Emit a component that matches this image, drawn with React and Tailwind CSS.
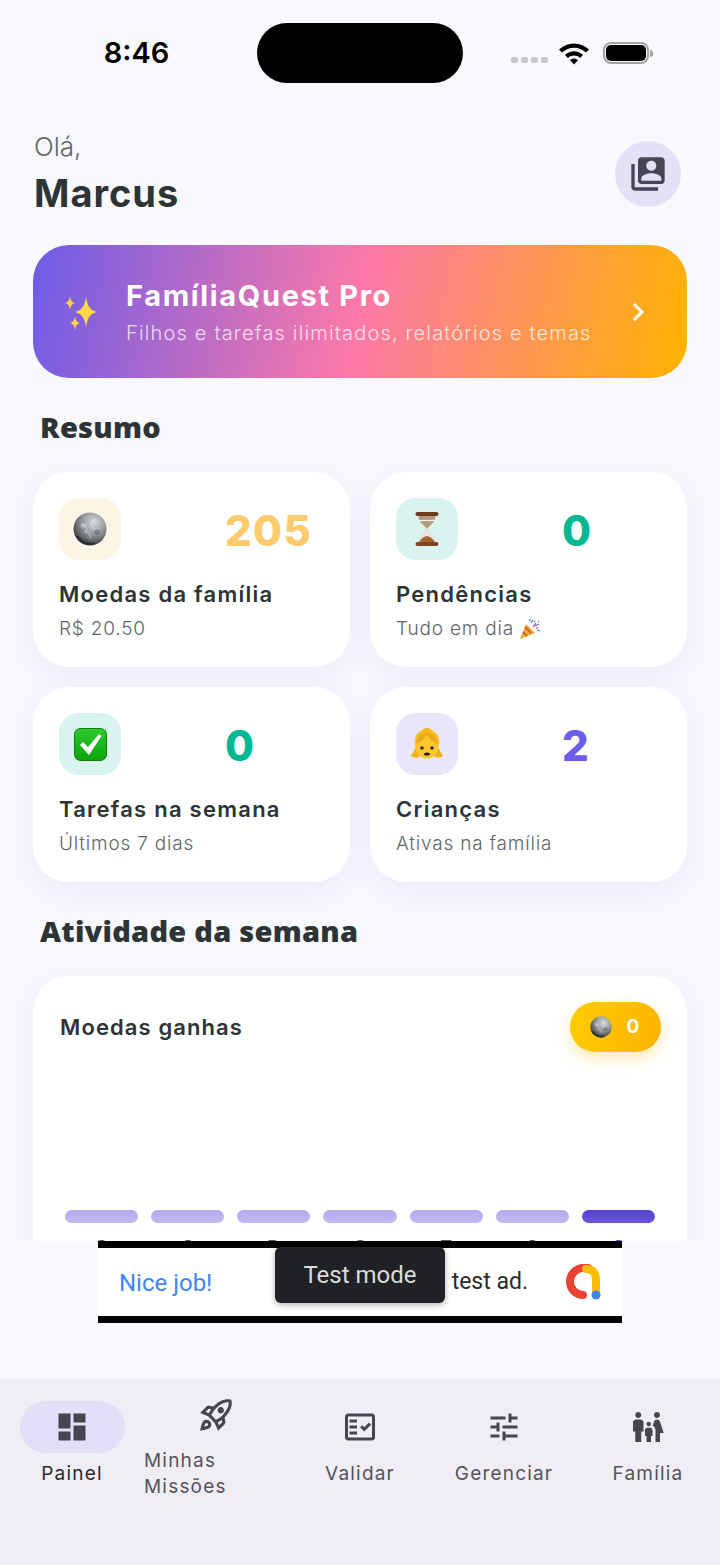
import { MdDashboard, MdOutlineRocketLaunch, MdOutlineFactCheck, MdTune, MdFamilyRestroom, MdSwitchAccount, MdChevronRight } from 'react-icons/md';

const Coin = ({ id, size }) => (
    <svg width={size} height={size} viewBox="0 0 34 34">
        <defs>
            <radialGradient id={id} cx="62%" cy="30%" r="80%">
                <stop offset="0%" stopColor="#d8dadc" />
                <stop offset="45%" stopColor="#94989b" />
                <stop offset="100%" stopColor="#26282b" />
            </radialGradient>
        </defs>
        <circle cx="17" cy="17" r="16.5" fill={`url(#${id})`} />
        <path d="M8 12l4 1 2 4-2 3 4 1 2 6M21 7l-3 6 4 5 4-1" fill="none" stroke="#f0f1f2" strokeWidth="1.5" opacity="0.35" />
        <circle cx="10" cy="14" r="2.5" fill="#e8eaeb" opacity="0.35" />
        <circle cx="24" cy="20" r="3" fill="#4a4d50" opacity="0.4" />
        <path d="M4 24c4 6 10 9 18 7" fill="none" stroke="#17181a" strokeWidth="2.500" opacity="0.55" />
    </svg>
);

const Hourglass = () => (
    <svg width="24" height="36" viewBox="0 0 24 36">
        <path d="M3 4h18c0 8-6 10-7.500 14 1.500 4 7.500 6 7.500 14H3c0-8 6-10 7.500-14C9 14 3 12 3 4z" fill="#e6e4e0" />
        <path d="M3.500 5h17c-.5 7-6 9-8.500 13-2.500-4-8-6-8.500-13z" fill="#b39a7e" />
        <path d="M4 9.500h16" stroke="#f6f3ee" strokeWidth="1.200" />
        <path d="M4 32c.5-3 4-6 8-7 4 1 7.500 4 8 7z" fill="#a4642f" />
        <rect x="0.500" y="1" width="23" height="4" rx="2" fill="#6f3c1e" />
        <rect x="0.500" y="31" width="23" height="4" rx="2" fill="#7d4522" />
    </svg>
);

const CheckEmoji = () => (
    <svg width="33" height="33" viewBox="0 0 33 33">
        <defs>
            <linearGradient id="check-bg" x1="0" y1="0" x2="0" y2="1">
                <stop offset="0%" stopColor="#2cc92c" />
                <stop offset="100%" stopColor="#0da30d" />
            </linearGradient>
        </defs>
        <rect x="0.500" y="0.500" width="32" height="32" rx="6" fill="url(#check-bg)" stroke="#0a7f0a" />
        <path d="M6 17l3-3 5 5L25 6l2.500 2L15 27z" fill="#fff" />
    </svg>
);

const Girl = () => (
    <svg width="34" height="34" viewBox="0 0 34 34">
        <path d="M6 20c-2 4-4 7-5 9 2 2 7 2 9 0zM28 20c2 4 4 7 5 9-2 2-7 2-9 0z" fill="#efb31c" />
        <path d="M17 1c3 0 5 2 6 3 5 2 7 8 6 14H5C4 12 6 6 11 4c1-1 3-3 6-3z" fill="#f5bb22" />
        <circle cx="17" cy="20" r="11.500" fill="#fdc62e" />
        <path d="M6 17c3-1 8-5 11-9 3 4 8 8 11 9-1-6-5-11-11-11S7 11 6 17z" fill="#eeaa16" />
        <circle cx="12" cy="21" r="1.700" fill="#33241a" />
        <circle cx="22" cy="21" r="1.700" fill="#33241a" />
        <ellipse cx="17" cy="27" rx="3" ry="1.600" fill="#2e1b12" />
    </svg>
);

const Party = () => (
    <svg width="22" height="22" viewBox="0 0 22 22">
        <path d="M1 21L7 6l9 9z" fill="#e8a93a" />
        <path d="M4 14l4 4M6 9l6 6" stroke="#c2552e" strokeWidth="1.500" />
        <path d="M12 5l2-3M16 8l4-2M15 3l1 1M18 12l3 1M11 1l0 2" stroke="#4a86d8" strokeWidth="1.300" />
        <path d="M14 9l3-4M17 10l2 0M19 3l1 1" stroke="#e0558a" strokeWidth="1.300" />
    </svg>
);

const Sparkles = () => (
    <svg width="36" height="36" viewBox="0 0 36 36">
        <path d="M22 2Q23 16 33 18 23 20 22 34 21 20 11 18 21 16 22 2z" fill="#ffd84a" />
        <path d="M6 2Q6.500 8 11 9 6.500 10 6 16 5.500 10 1 9 5.500 8 6 2z" fill="#ffcf45" />
        <path d="M11 22Q11.500 28 16 29 11.500 30 11 36 10.500 30 6 29 10.500 28 11 22z" fill="#ffd84a" />
    </svg>
);

const Wifi = () => (
    <svg width="32" height="24" viewBox="0 0 32 24">
        <path d="M1 8.500C9.500 .5 22.500 .5 31 8.500l-3 3C21 5 11 5 4 11.500z" fill="#000" />
        <path d="M7 14c5.500-5 12.500-5 18 0l-3 3c-3.700-3.200-8.300-3.200-12 0z" fill="#000" />
        <path d="M12 19c2.500-2 5.500-2 8 0l-4 4.500z" fill="#000" />
    </svg>
);

const AdLogo = () => (
    <svg width="36" height="36" viewBox="0 0 36 36">
        <path d="M22 4C12 2 4 9 4 18c0 7 6 13 13 13" fill="none" stroke="#ea4335" strokeWidth="8" strokeLinecap="round" />
        <path d="M20 5c7 0 10 4 10 10v14" fill="none" stroke="#fbbc04" strokeWidth="8" strokeLinecap="round" />
        <circle cx="30" cy="31" r="4.500" fill="#4285f4" />
    </svg>
);

const StatCard = ({ icon, iconBg, value, valueColor, title, sub }) => (
    <div className="h-[195px] rounded-[36px] bg-white p-[26px] shadow-[0_10px_30px_rgba(108,92,231,0.08)]">
        <div className="flex items-center">
            <div className={`flex h-[62px] w-[62px] items-center justify-center rounded-[20px] ${iconBg}`}>{icon}</div>
            <span className={`ml-[104px] pt-[3px] text-[42px] font-extrabold leading-none tracking-[1.300px] ${valueColor}`}>{value}</span>
        </div>
        <div className="mt-[19px] text-[22px] font-semibold leading-[30px] tracking-[1.250px] text-[#2d3436]">{title}</div>
        <div className="mt-[7px] flex items-center gap-[5px] text-[19px] font-light leading-[26px] tracking-[0.800px] text-[#5f666a]">{sub}</div>
    </div>
);

const NavItem = ({ icon, label, active }) => (
    <div className="flex w-[144px] flex-col items-center pt-[22px]">
        <div className={`flex h-[52px] w-[105px] items-center justify-center rounded-full ${active ? 'bg-[#e3dff8]' : ''}`}>{icon}</div>
        <span className={`mt-[6px] pt-[2px] text-[19px] leading-[26px] tracking-[1.200px] ${active ? 'text-[#2a2930]' : 'text-[#55535c]'}`}>{label}</span>
    </div>
);

const days = ['S', 'S', 'D', 'S', 'T', 'Q', 'Q'];

export default function App() {
    return (
        <div className="flex h-[1565px] w-[720px] flex-col overflow-hidden bg-[#f8f8fd] font-['Inter',sans-serif]">
            <div className="h-[1241px] shrink-0 overflow-hidden">
                {/* status bar */}
                <div className="flex h-[100px] items-start">
                    <div className="flex h-[106px] w-[257px] items-center justify-center pl-[16px] text-[29px] font-semibold text-black">8:46</div>
                    <div className="mt-[23px] h-[60px] w-[206px] rounded-[30px] bg-black"></div>
                    <div className="ml-[48px] mt-[41px] flex items-center">
                        <div className="mt-[13px] flex gap-[3px]">
                            <span className="h-[6px] w-[7px] rounded-[2px] bg-[#c9c9cc]"></span>
                            <span className="h-[6px] w-[7px] rounded-[2px] bg-[#c9c9cc]"></span>
                            <span className="h-[6px] w-[7px] rounded-[2px] bg-[#c9c9cc]"></span>
                            <span className="h-[6px] w-[7px] rounded-[2px] bg-[#c9c9cc]"></span>
                        </div>
                        <div className="ml-[10px]"><Wifi /></div>
                        <div className="ml-[13px] flex h-[22px] w-[46px] items-center justify-center rounded-[8px] border-2 border-[#a3a3a6]">
                            <div className="h-[16px] w-[40px] rounded-[5px] bg-black"></div>
                        </div>
                        <div className="ml-[1px] h-[7px] w-[3px] rounded-r-full bg-[#a3a3a6]"></div>
                    </div>
                </div>

                {/* greeting */}
                <div className="mt-[30px] flex items-start justify-between pl-[34px] pr-[39px]">
                    <div>
                        <div className="text-[26px] font-light leading-[34px] text-[#5f666a]">Olá,</div>
                        <div className="mt-[6px] text-[38px] font-bold leading-[46px] tracking-[1px] text-[#2d3436]">Marcus</div>
                    </div>
                    <div className="mt-[11px] flex h-[66px] w-[66px] items-center justify-center rounded-full bg-[#e5e0f8]">
                        <MdSwitchAccount size={40} color="#474552" />
                    </div>
                </div>

                {/* pro banner */}
                <div className="mx-[33px] mt-[29px] flex h-[133px] items-center rounded-[36px] bg-[linear-gradient(101deg,#6c5ce7,#fd79a8,#ffb300)] pl-[31px] pr-[31px]">
                    <Sparkles />
                    <div className="ml-[26px] flex-1 pt-[2px]">
                        <div className="text-[29px] font-bold leading-[36px] tracking-[1.650px] text-white">FamíliaQuest Pro</div>
                        <div className="mt-[5px] text-[20px] font-light leading-[28px] tracking-[1.170px] text-white/75">Filhos e tarefas ilimitados, relatórios e temas</div>
                    </div>
                    <MdChevronRight size={36} color="#fff" />
                </div>

                <h2 className="ml-[40px] mt-[29px] font-['Noto_Sans',sans-serif] text-[29px] font-black leading-[40px] tracking-[0.250px] text-[#2d3436]">Resumo</h2>

                <div className="mx-[33px] mt-[25px] grid grid-cols-2 gap-[20px]">
                    <StatCard icon={<Coin id="coin-a" size={34} />} iconBg="bg-[#fff5e6]" value="205" valueColor="text-[#fdcb6e]" title="Moedas da família" sub="R$ 20.50" />
                    <StatCard icon={<Hourglass />} iconBg="bg-[#d9f4ee]" value="0" valueColor="text-[#00b894]" title="Pendências" sub={<>Tudo em dia <Party /></>} />
                    <StatCard icon={<CheckEmoji />} iconBg="bg-[#d9f4ee]" value="0" valueColor="text-[#00b894]" title="Tarefas na semana" sub="Últimos 7 dias" />
                    <StatCard icon={<Girl />} iconBg="bg-[#e9e6fb]" value="2" valueColor="text-[#6c5ce7]" title="Crianças" sub="Ativas na família" />
                </div>

                <h2 className="ml-[40px] mt-[29px] font-['Noto_Sans',sans-serif] text-[29px] font-black leading-[40px] tracking-[0.250px] text-[#2d3436]">Atividade da semana</h2>

                {/* chart card, cut off by the ad */}
                <div className="mx-[33px] mt-[25px] h-[320px] rounded-[36px] bg-white px-[32px] pt-[26px] shadow-[0_10px_30px_rgba(108,92,231,0.08)]">
                    <div className="-mr-[6px] flex h-[50px] items-center justify-between">
                        <span className="-ml-[5px] text-[22px] font-semibold tracking-[1.100px] text-[#2d3436]">Moedas ganhas</span>
                        <div className="flex h-[50px] w-[91px] items-center justify-center gap-[15px] rounded-full bg-[linear-gradient(100deg,#ffcc00,#ffb300)] pr-[2px] shadow-[0_6px_16px_rgba(255,179,0,0.3)]">
                            <Coin id="coin-b" size={22} />
                            <span className="text-[19px] font-bold text-white">0</span>
                        </div>
                    </div>
                    <div className="mt-[158px] grid grid-cols-7 gap-[13px]">
                        {days.map((d, i) => (
                            <div key={i} className="flex flex-col items-center">
                                <div className={`h-[13px] w-full rounded-full ${i === 6 ? 'bg-[linear-gradient(#5443cf,#6456de)]' : 'bg-[linear-gradient(#b3a9ec,#c1b9f2)]'}`}></div>
                                <span className={`mt-[14px] text-[18px] font-medium leading-[22px] ${i === 6 ? 'text-[#5443cf]' : 'text-[#555]'}`}>{d}</span>
                            </div>
                        ))}
                    </div>
                </div>
            </div>

            {/* ad */}
            <div className="flex h-[138px] shrink-0 justify-center">
                <div className="relative h-[82px] w-[524px] border-y-[7px] border-black bg-white">
                    <div className="flex h-full items-center pl-[21px] pr-[20px]">
                        <div className="mr-[38px] flex flex-1 justify-between whitespace-nowrap pt-[2px] font-['Roboto',sans-serif] text-[23px]">
                            <span className="text-[24px] text-[#4285f4]">Nice job!</span>
                            <span className="text-[#2b2b2b]">displaying a test ad.</span>
                        </div>
                        <AdLogo />
                    </div>
                    <div className="absolute left-[177px] top-[-1px] flex h-[56px] w-[170px] items-center justify-center rounded-[6px] bg-[#202124] font-['Roboto',sans-serif] text-[24px] text-[#dcdcdc] shadow-[0_2px_6px_rgba(0,0,0,0.3)]">Test mode</div>
                </div>
            </div>

            {/* bottom nav */}
            <div className="flex h-[186px] shrink-0 bg-[#f1edf5]">
                <NavItem active icon={<MdDashboard size={36} color="#474552" />} label="Painel" />
                <div className="flex w-[144px] flex-col items-center pt-[17px]">
                    <MdOutlineRocketLaunch size={38} color="#474552" />
                    <span className="mt-[14px] w-[144px] text-[19px] leading-[26px] tracking-[1.200px] text-[#55535c]">Minhas Missões</span>
                </div>
                <NavItem icon={<MdOutlineFactCheck size={36} color="#474552" />} label="Validar" />
                <NavItem icon={<MdTune size={36} color="#474552" />} label="Gerenciar" />
                <NavItem icon={<MdFamilyRestroom size={36} color="#474552" />} label="Família" />
            </div>
        </div>
    );
}
